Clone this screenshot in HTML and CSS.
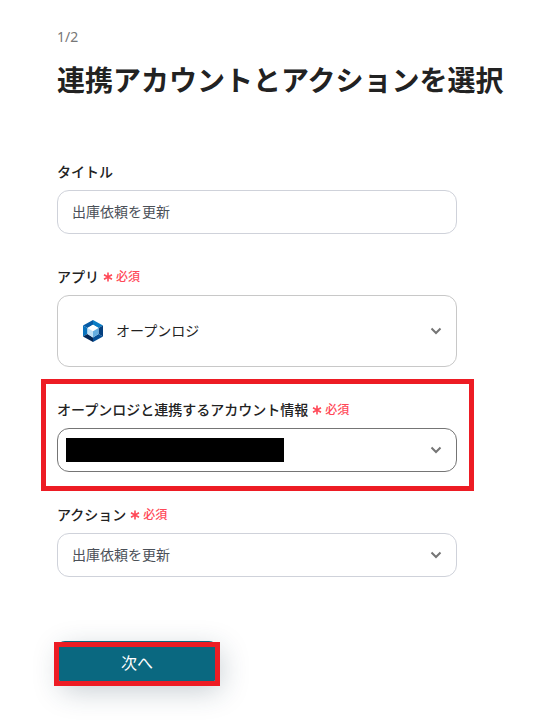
FILE: index.html
```
<!DOCTYPE html>
<html lang="ja">
<head>
  <meta charset="UTF-8">
  <meta name="viewport" content="width=device-width, initial-scale=1.0">
  <title>連携アカウントとアクションを選択</title>
  <link rel="stylesheet" href="styles.css">
</head>
<body>
  <main>
    <p class="step">1/2</p>
    <h1>連携アカウントとアクションを選択</h1>
    <form class="form">
      <div class="field">
        <label for="title">タイトル</label>
        <input type="text" id="title" class="control" value="出庫依頼を更新">
      </div>
      <div class="field">
        <label for="app">アプリ<span class="required"><svg viewBox="0 0 10 10"><path d="M5 0.5V9.5M1 2.8L9 7.2M9 2.8L1 7.2"/></svg>必須</span></label>
        <div class="select select-app">
          <svg class="app-icon" viewBox="0 0 20 22">
            <path fill="#0b7cc4" d="M10 0L20 5.5L15.5 8L10 4.8Z"/>
            <path fill="#075ba5" d="M10 0L0 5.5L4.5 8L10 4.8Z"/>
            <path fill="#0872bd" d="M0 5.5L4.5 8V14L0 16.5Z"/>
            <path fill="#05407f" d="M20 5.5L15.5 8V14L20 16.5Z"/>
            <path fill="#032656" d="M0 16.5L4.5 14L10 17.4V22Z"/>
            <path fill="#064f96" d="M20 16.5L15.5 14L10 17.4V22Z"/>
            <path fill="#ffffff" d="M10 4.8L15.5 8L10 11.2L4.5 8Z"/>
            <path fill="#c0e0f5" d="M4.5 8L10 11.2V17.4L4.5 14Z"/>
            <path fill="#64ade0" d="M15.5 8L10 11.2V17.4L15.5 14Z"/>
          </svg>
          <select id="app" class="control">
            <option>オープンロジ</option>
          </select>
          <svg class="chevron" viewBox="0 0 12 8"><path d="M1.5 1.5L6 6L10.5 1.5"/></svg>
        </div>
      </div>
      <div class="field marked">
        <label for="account">オープンロジと連携するアカウント情報<span class="required"><svg viewBox="0 0 10 10"><path d="M5 0.5V9.5M1 2.8L9 7.2M9 2.8L1 7.2"/></svg>必須</span></label>
        <div class="select select-account">
          <select id="account" class="control">
            <option></option>
          </select>
          <span class="mask"></span>
          <svg class="chevron" viewBox="0 0 12 8"><path d="M1.5 1.5L6 6L10.5 1.5"/></svg>
        </div>
      </div>
      <div class="field">
        <label for="action">アクション<span class="required"><svg viewBox="0 0 10 10"><path d="M5 0.5V9.5M1 2.8L9 7.2M9 2.8L1 7.2"/></svg>必須</span></label>
        <div class="select">
          <select id="action" class="control">
            <option>出庫依頼を更新</option>
          </select>
          <svg class="chevron" viewBox="0 0 12 8"><path d="M1.5 1.5L6 6L10.5 1.5"/></svg>
        </div>
      </div>
      <div class="actions">
        <button type="button" class="btn">次へ</button>
      </div>
    </form>
  </main>
</body>
</html>
```
FILE: styles.css
```
* {
  box-sizing: border-box;
}
body {
  margin: 0;
  background-color: #fff;
  color: #222;
  font-family: "Noto Sans CJK JP", sans-serif;
  font-size: 14px;
}
main {
  padding: 27px 24px 40px 57px;
}
.step {
  margin: 0;
  color: #777;
  font-family: "Noto Sans", sans-serif;
  line-height: 20px;
}
h1 {
  margin: 12px 0 62px;
  font-size: 28px;
  line-height: 40px;
  white-space: nowrap;
}
.form {
  display: flex;
  flex-direction: column;
  gap: 32px;
  max-width: 400px;
}
.field {
  display: flex;
  flex-direction: column;
  gap: 9px;
}
.field label {
  display: flex;
  align-items: center;
  gap: 4px;
  font-weight: 500;
  line-height: 20px;
}
.required {
  display: flex;
  align-items: center;
  gap: 3px;
  color: #ff4857;
  font-size: 12px;
}
.required svg {
  width: 10px;
  height: 10px;
  margin-top: 2px;
  fill: none;
  stroke: #ff4857;
  stroke-width: 1.6;
}
.control {
  display: block;
  width: 100%;
  height: 44px;
  margin: 0;
  padding: 0 14px 3px;
  border: 1px solid #cfd2da;
  border-radius: 12px;
  background-color: #fff;
  color: #4b5058;
  font-family: inherit;
  font-size: 14px;
  appearance: none;
}
.select {
  position: relative;
}
.chevron {
  position: absolute;
  top: 50%;
  right: 15px;
  width: 12px;
  height: 8px;
  transform: translateY(-50%);
  fill: none;
  stroke: #757575;
  stroke-width: 2;
  pointer-events: none;
}
.select-app .control {
  height: 72px;
  padding-left: 58px;
  border-color: #c8c8c8;
  color: #222;
}
.app-icon {
  position: absolute;
  top: 50%;
  left: 26px;
  width: 20px;
  height: 22px;
  transform: translateY(-50%);
}
.select-account .control {
  border-color: #757575;
}
.mask {
  position: absolute;
  top: 10px;
  left: 9px;
  width: 218px;
  height: 24px;
  background-color: #000;
}
.marked,
.actions {
  position: relative;
}
/* red highlight frames */
.marked::after,
.actions::after {
  content: "";
  position: absolute;
  border: 5px solid #ed1c24;
  pointer-events: none;
}
.marked::after {
  inset: -20px -17px -19px -16px;
}
.actions {
  align-self: flex-start;
  margin-top: 32px;
}
.actions::after {
  inset: 1px -3px -3px;
}
.btn {
  display: block;
  width: 160px;
  height: 42px;
  padding: 0;
  border: none;
  border-radius: 8px;
  background-color: #0a6880;
  box-shadow: 4px 8px 28px rgba(30, 60, 80, 0.25);
  color: #fff;
  font-family: inherit;
  font-size: 16px;
  cursor: pointer;
}
```
